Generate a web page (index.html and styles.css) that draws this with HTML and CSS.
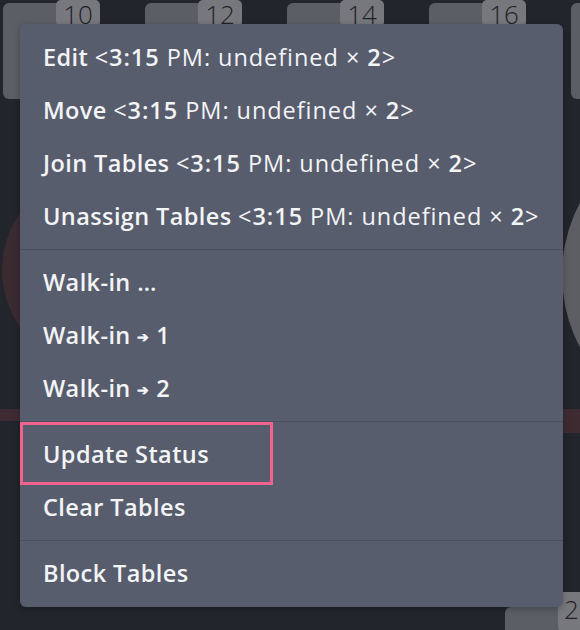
FILE: index.html
```html
<!DOCTYPE html>
<html lang="en">
<head>
<meta charset="utf-8">
<title>Table menu</title>
<link rel="stylesheet" href="styles.css">
</head>
<body>
<div class="floor">
  <div class="shape circle-red"></div>
  <div class="shape circle-gray"></div>
  <div class="shape band band-left"></div>
  <div class="shape band band-right"></div>

  <div class="tables">
    <div class="table"><span class="num">10</span></div>
    <div class="table"><span class="num">12</span></div>
    <div class="table"><span class="num">14</span></div>
    <div class="table"><span class="num">16</span></div>
    <div class="table"><span class="num">18</span></div>
  </div>

  <div class="table table-bottom"><span class="num">2</span></div>

  <div class="menu">
    <div class="group">
      <div class="item">Edit <span class="res">&lt;<b>3:15</b> PM: undefined × <b>2</b>&gt;</span></div>
      <div class="item">Move <span class="res">&lt;<b>3:15</b> PM: undefined × <b>2</b>&gt;</span></div>
      <div class="item">Join Tables <span class="res">&lt;<b>3:15</b> PM: undefined × <b>2</b>&gt;</span></div>
      <div class="item">Unassign Tables <span class="res">&lt;<b>3:15</b> PM: undefined × <b>2</b>&gt;</span></div>
    </div>
    <div class="group">
      <div class="item">Walk-in …</div>
      <div class="item">Walk-in <span class="arrow">➔</span> 1</div>
      <div class="item">Walk-in <span class="arrow">➔</span> 2</div>
    </div>
    <div class="group">
      <div class="item">Update Status</div>
      <div class="item">Clear Tables</div>
    </div>
    <div class="group">
      <div class="item">Block Tables</div>
    </div>
    <div class="highlight"></div>
  </div>
</div>
</body>
</html>
```

FILE: styles.css
```css
html, body {
  margin: 0;
  padding: 0;
}
body {
  width: 580px;
  height: 630px;
  overflow: hidden;
  background: #22252b;
  font-family: "Open Sans", "Noto Sans", sans-serif;
}
.floor {
  position: relative;
  width: 580px;
  height: 630px;
  overflow: hidden;
}
.shape {
  position: absolute;
}
.circle-red {
  left: 2px;
  top: 171px;
  width: 198px;
  height: 198px;
  border-radius: 50%;
  background: #3a2b31;
}
.circle-gray {
  left: 562px;
  top: 121px;
  width: 308px;
  height: 308px;
  border-radius: 50%;
  background: #5c5e63;
}
.band {
  background: #3d2b31;
}
.band-left {
  left: 0;
  top: 409px;
  width: 30px;
  height: 12px;
}
.band-right {
  left: 550px;
  top: 409px;
  width: 30px;
  height: 24px;
}
.tables {
  display: flex;
  gap: 45px;
  padding: 3px 0 0 3px;
  width: 800px;
}
.table {
  position: relative;
  flex: none;
  width: 97px;
  height: 96px;
  border-radius: 6px;
  background: #5b5e64;
}
.num {
  position: absolute;
  top: -3px;
  right: 0;
  width: 44px;
  height: 26px;
  border-radius: 5px;
  background: #76787d;
  color: #1f2126;
  font-family: "Open Sans", sans-serif;
  font-weight: 300;
  font-size: 26px;
  line-height: 28px;
  text-align: center;
}
.table-bottom {
  position: absolute;
  left: 505px;
  top: 607px;
  width: 120px;
}
.table-bottom .num {
  top: -15px;
  right: auto;
  left: 53px;
  width: 44px;
  height: 40px;
  text-align: left;
  padding-left: 6px;
  box-sizing: border-box;
  line-height: 34px;
}
.menu {
  position: absolute;
  left: 20px;
  top: 24px;
  width: 543px;
  padding: 7px 0;
  box-sizing: border-box;
  border-radius: 6px;
  background: #575d6d;
  color: #f3f4f6;
  box-shadow: 0 2px 6px rgba(0,0,0,0.25);
}
.group + .group {
  border-top: 1px solid #4b5060;
  margin-top: 6px;
  padding-top: 6px;
}
.item {
  height: 53px;
  line-height: 53px;
  padding-left: 23px;
  font-size: 23.5px;
  font-weight: 600;
  white-space: nowrap;
  letter-spacing: 0.4px;
}
.res {
  font-weight: 400;
  letter-spacing: 0.95px;
}
.res b {
  font-weight: 600;
}
.arrow {
  font-size: 14px;
  vertical-align: 2px;
}
.highlight {
  position: absolute;
  left: 0;
  top: 398px;
  width: 253px;
  height: 63px;
  box-sizing: border-box;
  border: 3px solid #f2638d;
}
```
